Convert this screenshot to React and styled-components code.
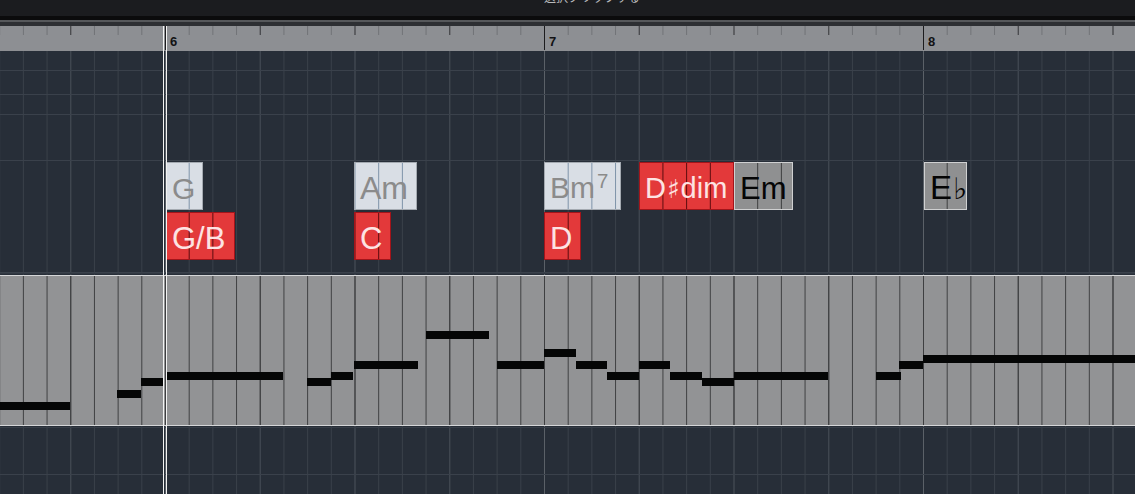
import styled, { createGlobalStyle } from "styled-components";

const S = 379 / 16; // one sixteenth, px
const BAR = 165; // x of bar 6

const GlobalStyle = createGlobalStyle`
  html, body { margin: 0; padding: 0; background: #272e38; }
  body { font-family: "Liberation Sans", Arial, sans-serif; overflow: hidden; }
`;

const grid = (six, beat, bar) => `
  linear-gradient(to right, ${bar} 0 1px, transparent 1px) ${BAR}px 0 / ${S * 16}px 100% repeat-x,
  linear-gradient(to right, ${beat} 0 1px, transparent 1px) ${BAR}px 0 / ${S * 4}px 100% repeat-x,
  linear-gradient(to right, ${six} 0 1px, transparent 1px) ${BAR}px 0 / ${S}px 100% repeat-x
`;

const hLines = (color, ys) =>
  ys
    .map((y) => `linear-gradient(${color}, ${color}) 0 ${y}px / 100% 1px no-repeat`)
    .join(",");

const Window = styled.div`
  position: relative;
  width: 1135px;
  height: 494px;
  overflow: hidden;
  display: flex;
  flex-direction: column;
  background: #272e38;
`;

const TitleBar = styled.div`
  height: 16px;
  flex: none;
  display: flex;
  justify-content: center;
  padding-left: 49px;
  overflow: hidden;
  background: #1b1c1f;
`;

const Title = styled.span`
  margin-top: -11px;
  font-family: "Noto Sans CJK JP", sans-serif;
  font-size: 12px;
  line-height: 16px;
  color: #b9babc;
`;

const Band = styled.div`
  flex: none;
  height: ${(p) => p.$h}px;
  background: ${(p) => p.$c};
`;

const Ruler = styled.div`
  position: relative;
  flex: none;
  height: 25px;
  background:
    linear-gradient(to right, #1c1c1e 0 1px, transparent 1px) ${BAR}px 0 / ${S * 16}px 24px repeat-x,
    linear-gradient(to right, #3c3d40 0 1px, transparent 1px) ${BAR}px 0 / ${S * 4}px 9px repeat-x,
    linear-gradient(to right, #707276 0 1px, transparent 1px) ${BAR}px 0 / ${S}px 9px repeat-x,
    #8d8f93;
`;

const BarNumber = styled.span`
  position: absolute;
  top: 8px;
  left: ${(p) => p.$x + 5}px;
  font-size: 13px;
  font-weight: bold;
  color: #121214;
`;

const ChordTrack = styled.div`
  position: relative;
  flex: none;
  height: 224px;
  background: ${hLines("#3a414b", [19, 43, 63, 109, 221])},
    ${hLines("#313842", [222])}, ${grid("#394049", "#424952", "#5b6168")}, #272e38;
`;

const kinds = {
  light: { bg: "#d9dee5", border: "#a4aab1", line: "#7d92a8", text: "#8b8b8b" },
  red: { bg: "#e3393a", border: "#a3141a", line: "#5a0b0d", text: "#fde3e3" },
  gray: { bg: "#8f9091", border: "#cfd0d1", line: "#3c3d3e", text: "#050505" },
};

const ChordBox = styled.div`
  position: absolute;
  box-sizing: border-box;
  left: ${(p) => p.$x}px;
  top: ${(p) => (p.$row ? 161 : 111)}px;
  width: ${(p) => p.$w}px;
  height: 48px;
  display: flex;
  align-items: flex-end;
  padding: 0 0 ${(p) => 10 - 0.15 * p.$size}px 5px;
  border: 1px solid ${(p) => kinds[p.$kind].border};
  background: linear-gradient(to right, ${(p) => kinds[p.$kind].line} 0 1px, transparent 1px)
      ${(p) => (((BAR - p.$x - 1) % S) + S) % S}px 0 / ${S}px 100% repeat-x,
    ${(p) => kinds[p.$kind].bg};
  color: ${(p) => kinds[p.$kind].text};
  font-size: ${(p) => p.$size}px;
  line-height: 1;
  white-space: nowrap;
  overflow: hidden;
`;

const Label = styled.span`
  display: block;
  line-height: 1;
`;

const Sup = styled.span`
  font-size: 0.68em;
  vertical-align: 0.5em;
  margin-left: 2px;
`;

const Acc = styled.span`
  font-family: "DejaVu Sans", sans-serif;
  font-size: ${(p) => p.$scale}em;
  margin: 0 1px;
`;

const NoteLane = styled.div`
  position: relative;
  flex: none;
  height: 149px;
  border-top: 1px solid #d5d6d8;
  border-bottom: 1px solid #d5d6d8;
  background: ${grid("#3e3f41", "#3e3f41", "#3e3f41")}, #929395;
`;

const Note = styled.div`
  position: absolute;
  height: 8px;
  background: #050606;
`;

const Lower = styled.div`
  flex: 1;
  background: ${hLines("#363d47", [1])}, ${hLines("#3a414b", [48])},
    ${grid("#394049", "#424952", "#5b6168")}, #272e38;
`;

const Playhead = styled.div`
  position: absolute;
  top: 26px;
  bottom: 0;
  left: 163px;
  width: 2px;
  border-left: 1px solid #f2f2f2;
  border-right: 1px solid #f2f2f2;
`;

const chords = [
  { x: 166, w: 37, row: 0, kind: "light", size: 30, label: "G" },
  { x: 354, w: 63, row: 0, kind: "light", size: 32, label: "Am" },
  { x: 544, w: 77, row: 0, kind: "light", size: 30, label: <>Bm<Sup>7</Sup></> },
  { x: 639, w: 95, row: 0, kind: "red", size: 29, label: <>D<Acc $scale={0.9}>♯</Acc>dim</> },
  { x: 734, w: 59, row: 0, kind: "gray", size: 31, label: "Em" },
  { x: 924, w: 43, row: 0, kind: "gray", size: 33, label: <>E<Acc $scale={0.9}>♭</Acc></> },
  { x: 166, w: 69, row: 1, kind: "red", size: 31, label: "G/B" },
  { x: 354, w: 37, row: 1, kind: "red", size: 31, label: "C" },
  { x: 544, w: 37, row: 1, kind: "red", size: 31, label: "D" },
];

// [start, end, y] in page pixels
const notes = [
  [0, 70, 402], [117, 141, 390], [141, 163, 378], [166, 283, 372],
  [307, 331, 378], [331, 353, 372], [354, 418, 361], [426, 489, 331],
  [497, 544, 361], [544, 576, 349], [576, 607, 361], [607, 639, 372],
  [639, 670, 361], [670, 702, 372], [702, 734, 378], [734, 828, 372],
  [876, 901, 372], [899, 923, 361], [923, 1135, 355],
];

export default function App() {
  return (
    <Window>
      <GlobalStyle />
      <TitleBar>
        <Title>選択クリップする</Title>
      </TitleBar>
      <Band $h={4} $c="#0b0b0c" />
      <Band $h={2} $c="#56585b" />
      <Band $h={4} $c="#2d2f33" />
      <Ruler>
        <BarNumber $x={165}>6</BarNumber>
        <BarNumber $x={544}>7</BarNumber>
        <BarNumber $x={923}>8</BarNumber>
      </Ruler>
      <ChordTrack>
        {chords.map((c, i) => (
          <ChordBox key={i} $x={c.x} $w={c.w} $row={c.row} $kind={c.kind} $size={c.size}>
            <Label>{c.label}</Label>
          </ChordBox>
        ))}
      </ChordTrack>
      <NoteLane>
        {notes.map(([a, b, y], i) => (
          <Note key={i} style={{ left: a, width: b - a, top: y - 276 }} />
        ))}
      </NoteLane>
      <Lower />
      <Playhead />
    </Window>
  );
}
